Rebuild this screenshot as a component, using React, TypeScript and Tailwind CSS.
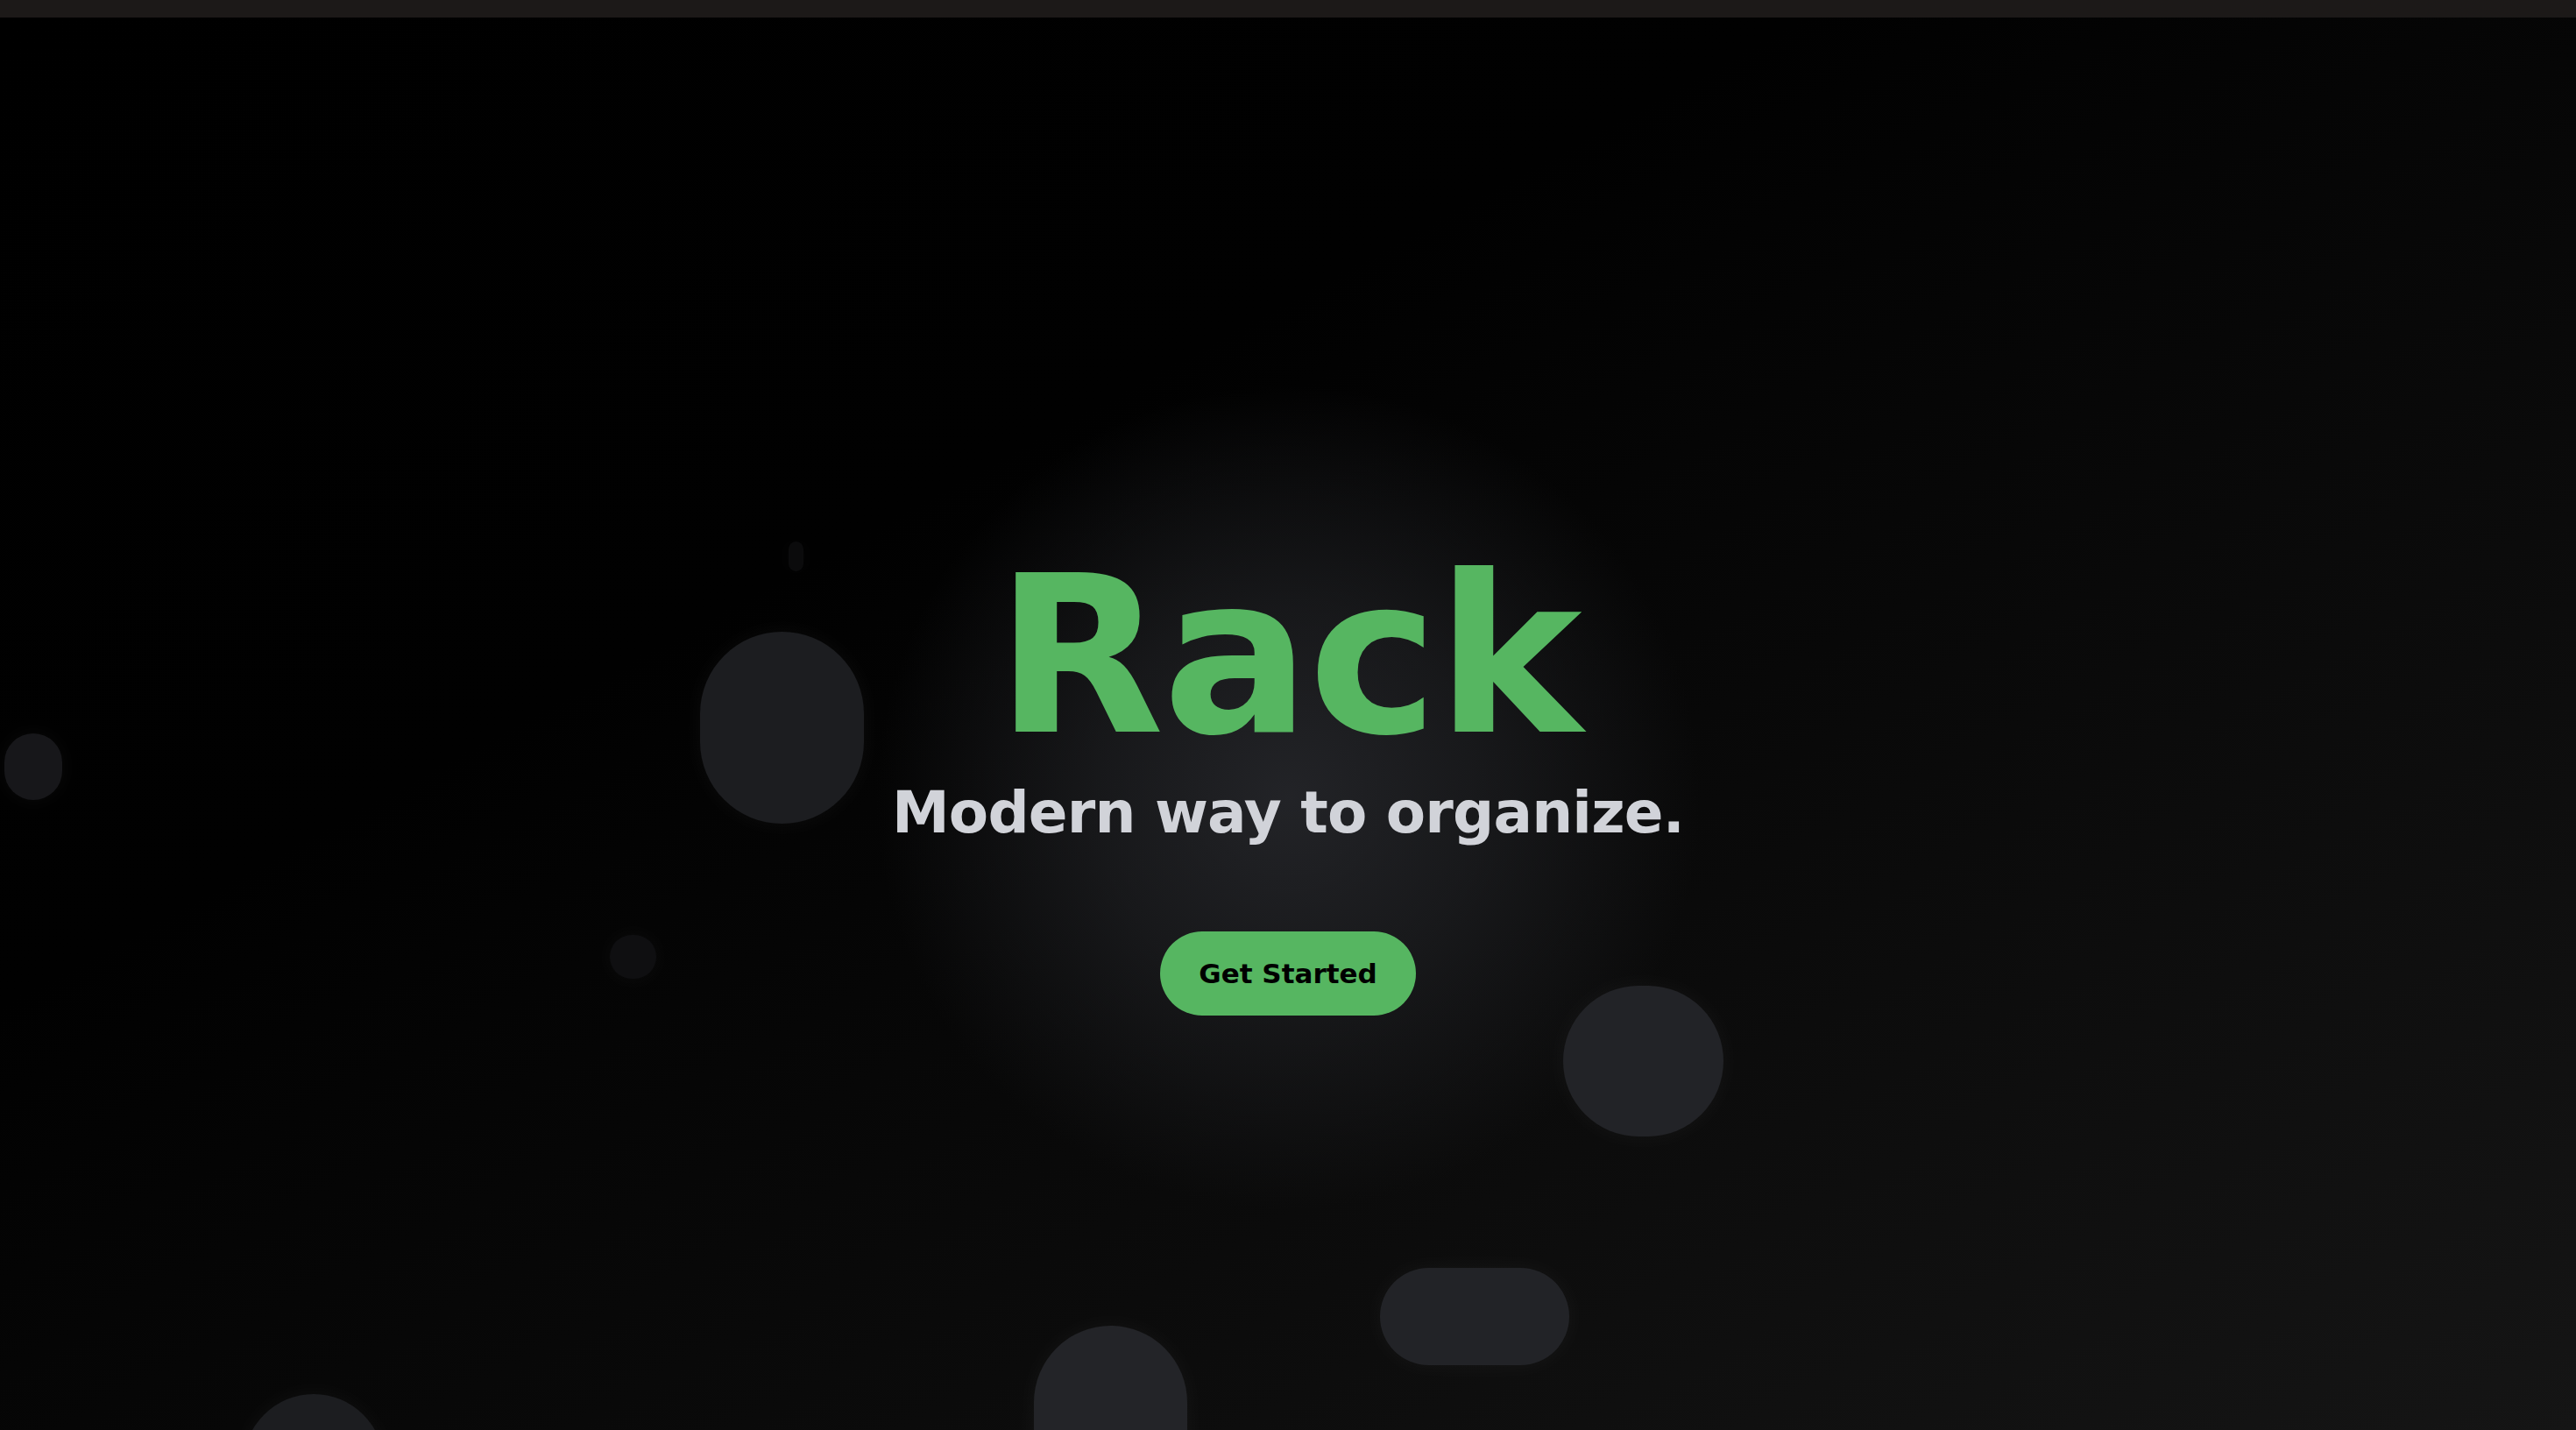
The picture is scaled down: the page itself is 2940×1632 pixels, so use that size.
const blobs = [
  { cls: "left-[900px] top-[598px] w-[17px] h-[34px] bg-[#0b0b0c]" },
  { cls: "left-[799px] top-[701px] w-[187px] h-[219px] bg-[#1c1d20]" },
  { cls: "left-[5px] top-[817px] w-[66px] h-[76px] bg-[#17171a]" },
  { cls: "left-[696px] top-[1047px] w-[53px] h-[50px] bg-[#0f0f11]" },
  { cls: "left-[1784px] top-[1105px] w-[183px] h-[172px] bg-[#222327]" },
  { cls: "left-[1575px] top-[1427px] w-[216px] h-[111px] bg-[#222327]" },
  { cls: "left-[1180px] top-[1493px] w-[175px] h-[260px] bg-[#232428]" },
  { cls: "left-[278px] top-[1571px] w-[160px] h-[160px] bg-[#1c1d20]" },
];

export default function App() {
  return (
    <div className="flex h-[1632px] w-full flex-col overflow-hidden bg-black font-['DejaVu_Sans',sans-serif]">
      {/* top strip */}
      <div className="h-5 w-full shrink-0 bg-[#1c1918]" />

      <main className="relative flex flex-1 flex-col items-center overflow-hidden bg-[radial-gradient(circle_at_1470px_890px,rgba(36,37,41,0.95)_0px,rgba(30,31,34,0.72)_220px,rgba(0,0,0,0)_470px),linear-gradient(to_bottom_right,#000000_0%,#010101_35%,#151515_100%)] pt-[604px]">
        {/* floating blobs */}
        {blobs.map((b, i) => (
          <div
            key={i}
            className={`absolute rounded-full shadow-[0_0_28px_rgba(255,255,255,0.045)] ${b.cls}`}
          />
        ))}

        <h1 className="relative text-[250px] font-bold leading-none tracking-[-2px] text-[#56b661]">
          Rack
        </h1>
        <p className="relative mt-[21px] text-[66px] font-bold leading-none tracking-[-0.8px] text-[#d1d3d9]">
          Modern way to organize.
        </p>
        <button className="relative mt-[102px] flex h-[96px] w-[292px] items-center justify-center rounded-full bg-[#56b661] text-[31px] font-bold text-black">
          Get Started
        </button>
      </main>
    </div>
  );
}
